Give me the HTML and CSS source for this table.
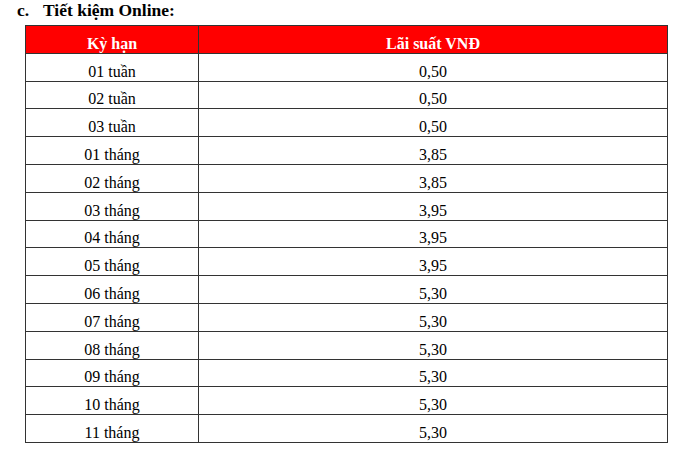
FILE: index.html
```html
<!DOCTYPE html>
<html lang="vi">
<head>
<meta charset="utf-8">
<link rel="stylesheet" href="styles.css">
</head>
<body>
<div class="page">
  <h2 class="title"><span class="marker">c.</span>Tiết kiệm Online:</h2>
  <table class="rates">
    <thead>
      <tr><th class="term">Kỳ hạn</th><th class="rate">Lãi suất VNĐ</th></tr>
    </thead>
    <tbody>
      <tr><td>01 tuần</td><td>0,50</td></tr>
      <tr><td>02 tuần</td><td>0,50</td></tr>
      <tr><td>03 tuần</td><td>0,50</td></tr>
      <tr><td>01 tháng</td><td>3,85</td></tr>
      <tr><td>02 tháng</td><td>3,85</td></tr>
      <tr><td>03 tháng</td><td>3,95</td></tr>
      <tr><td>04 tháng</td><td>3,95</td></tr>
      <tr><td>05 tháng</td><td>3,95</td></tr>
      <tr><td>06 tháng</td><td>5,30</td></tr>
      <tr><td>07 tháng</td><td>5,30</td></tr>
      <tr><td>08 tháng</td><td>5,30</td></tr>
      <tr><td>09 tháng</td><td>5,30</td></tr>
      <tr><td>10 tháng</td><td>5,30</td></tr>
      <tr><td>11 tháng</td><td>5,30</td></tr>
    </tbody>
  </table>
</div>
</body>
</html>
```
FILE: styles.css
```css
html, body {
  margin: 0;
  padding: 0;
  background: #ffffff;
}
.page {
  font-family: "Liberation Serif", "Times New Roman", serif;
  color: #000;
  padding: 0 0 0 25px;
}
.title {
  margin: 0 0 0 -8px;
  height: 25px;
  font-size: 17.5px;
  font-weight: bold;
  line-height: 25px;
  transform: translateY(-2px);
}
.marker {
  display: inline-block;
  width: 26px;
}
.rates {
  border-collapse: collapse;
  width: 643px;
  font-size: 16px;
}
.rates tr {
  height: 27.8px;
}
.rates th,
.rates td {
  border: 1px solid #333;
  text-align: center;
  vertical-align: bottom;
  padding: 0 0 0 0;
  line-height: 18px;
}
.rates th {
  background: #ff0000;
  color: #fff;
  font-weight: bold;
}
.rates .term {
  width: 172px;
}
```
